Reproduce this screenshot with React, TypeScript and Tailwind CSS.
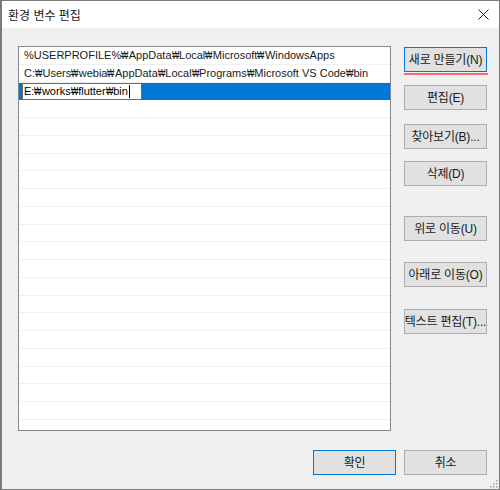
const paths = [
  "%USERPROFILE%₩AppData₩Local₩Microsoft₩WindowsApps",
  "C:₩Users₩webia₩AppData₩Local₩Programs₩Microsoft VS Code₩bin",
];

const sideButtons = [
  { label: "새로 만들기(N)", mt: "mt-[1px]", focused: true },
  { label: "편집(E)", mt: "mt-[10px]" },
  { label: "찾아보기(B)...", mt: "mt-[14px]" },
  { label: "삭제(D)", mt: "mt-[12px]" },
  { label: "위로 이동(U)", mt: "mt-[30px]" },
  { label: "아래로 이동(O)", mt: "mt-[21px]" },
  { label: "텍스트 편집(T)...", mt: "mt-[22px]" },
];

const font = { fontFamily: '"Liberation Sans", "Noto Sans CJK KR", sans-serif' };

// the Korean system font draws "\" as a narrow won sign
function PathText({ text }: { text: string }) {
  const parts = text.split("₩");
  return (
    <>
      {parts.map((p, i) => (
        <span key={i}>
          {i > 0 && (
            <span className="inline-block w-[7.5px]">
              <span className="inline-block origin-left scale-x-[0.7]">₩</span>
            </span>
          )}
          {p}
        </span>
      ))}
    </>
  );
}

function Button({ label, focused, primary }: { label: string; focused?: boolean; primary?: boolean }) {
  return (
    <div
      className={
        "flex h-[25px] w-[83px] items-center justify-center whitespace-nowrap bg-[#e1e1e1] text-[12px] tracking-[-0.2px] text-[#1a1a1a] border " +
        (focused || primary ? "border-[#0078d7]" : "border-[#adadad]")
      }
    >
      {label}
    </div>
  );
}

export default function App() {
  const rows = Array.from({ length: 22 });
  return (
    <div className="h-[490px] w-[500px] overflow-hidden bg-white" style={font}>
      <div className="flex h-full w-full flex-col border border-[#7a7a7a] border-l-2">
        {/* title bar */}
        <div className="flex h-[27px] items-center justify-between bg-white pl-[6px] pr-[10px]">
          <span className="pt-[2px] text-[12px] text-[#1a1a1a]">환경 변수 편집</span>
          <svg width="11" height="11" viewBox="0 0 11 11">
            <path d="M0.5 0.5 L10.5 10.5 M10.5 0.5 L0.5 10.5" stroke="#222" strokeWidth="1" />
          </svg>
        </div>

        <div className="relative flex flex-1 flex-col bg-[#f0f0f0]">
          <div className="flex pl-[16px] pt-[18px]">
            {/* list */}
            <div className="h-[385px] w-[373px] overflow-hidden border border-[#828790] bg-white">
              {rows.map((_, i) => {
                const text = paths[i];
                if (i === 2) {
                  return (
                    <div key={i} className="flex h-[17.75px] items-stretch bg-[#0078d7] pl-[3px]">
                      <div className="flex w-[120px] items-center overflow-hidden whitespace-nowrap border border-[#6a6a6a] bg-white pl-[1px] text-[11px] leading-none text-black">
                        <PathText text="E:₩works₩flutter₩bin" />
                        <span className="ml-[1px] inline-block h-[13px] w-[1px] bg-black" />
                      </div>
                    </div>
                  );
                }
                return (
                  <div
                    key={i}
                    className="flex h-[17.75px] items-center border-b border-[#f0f0f0] pl-[5px] text-[11px] leading-none whitespace-nowrap text-[#1a1a1a]"
                  >
                    {text && <PathText text={text} />}
                  </div>
                );
              })}
            </div>

            {/* side buttons */}
            <div className="ml-[13px] flex flex-col">
              {sideButtons.map((b) => (
                <div key={b.label} className={b.mt}>
                  <Button label={b.label} focused={b.focused} />
                  {b.focused && <div className="mt-[1px] h-[2px] w-[84px] bg-[#f06b78]" />}
                </div>
              ))}
            </div>
          </div>

          {/* bottom buttons */}
          <div className="mt-[19px] flex justify-end gap-[8px] pr-[12px]">
            <Button label="확인" primary />
            <Button label="취소" />
          </div>

          {/* resize grip */}
          <svg className="absolute bottom-[1px] right-[1px]" width="9" height="9" viewBox="0 0 9 9">
            {[
              [7, 1],
              [4, 4],
              [7, 4],
              [1, 7],
              [4, 7],
              [7, 7],
            ].map(([x, y]) => (
              <rect key={`${x}-${y}`} x={x} y={y} width="1.5" height="1.5" fill="#a0a0a0" />
            ))}
          </svg>
        </div>
      </div>
    </div>
  );
}
